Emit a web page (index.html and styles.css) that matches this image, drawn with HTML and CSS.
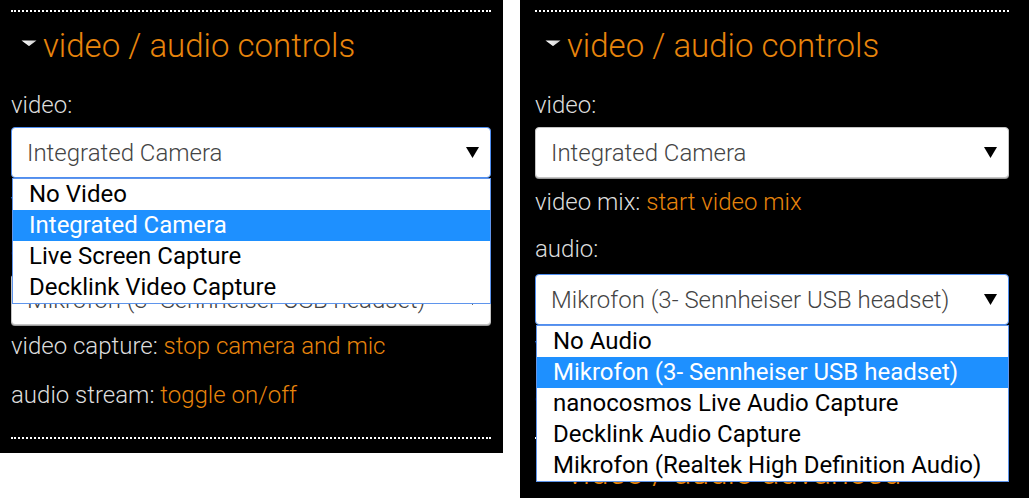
FILE: index.html
```html
<!DOCTYPE html>
<html lang="en">
<head>
<meta charset="utf-8">
<title>video / audio controls</title>
<link rel="stylesheet" href="styles.css">
</head>
<body>
<div class="page">
  <section class="panel panel-left">
    <div class="rule"></div>
    <h2 class="section-title"><svg class="caret" viewBox="0 0 16 6" width="16" height="6"><defs><linearGradient id="cg1" x1="0" x2="1" y1="0" y2="0"><stop offset="0" stop-color="#fff"/><stop offset="1" stop-color="#cfcfcf"/></linearGradient></defs><path d="M0.5,0.5 L15.5,0.5 L8.5,5.8 Q8,6.2 7.5,5.8 Z" fill="url(#cg1)"/></svg>video / audio controls</h2>
    <div class="label">video:</div>
    <div class="select-wrap">
      <div class="select is-focused"><span class="select-value">Integrated Camera</span><svg class="select-arrow" viewBox="0 0 13 11" width="13" height="11"><polygon points="0,0 13,0 6.5,11" fill="#000"/></svg></div>
      <ul class="dropdown">
        <li class="option">No Video</li>
        <li class="option is-active">Integrated Camera</li>
        <li class="option">Live Screen Capture</li>
        <li class="option">Decklink Video Capture</li>
      </ul>
    </div>
    <p class="row row-mix">video mix: <a class="link">start video mix</a></p>
    <div class="label label-audio">audio:</div>
    <div class="select-wrap select-wrap-audio">
      <div class="select"><span class="select-value">Mikrofon (3- Sennheiser USB headset)</span><svg class="select-arrow" viewBox="0 0 13 11" width="13" height="11"><polygon points="0,0 13,0 6.5,11" fill="#000"/></svg></div>
    </div>
    <p class="row row-capture">video capture: <a class="link">stop camera and mic</a></p>
    <p class="row row-stream">audio stream: <a class="link">toggle on/off</a></p>
    <div class="rule rule-bottom"></div>
  </section>

  <section class="panel panel-right">
    <div class="rule"></div>
    <h2 class="section-title"><svg class="caret" viewBox="0 0 16 6" width="16" height="6"><defs><linearGradient id="cg2" x1="0" x2="1" y1="0" y2="0"><stop offset="0" stop-color="#fff"/><stop offset="1" stop-color="#cfcfcf"/></linearGradient></defs><path d="M0.5,0.5 L15.5,0.5 L8.5,5.8 Q8,6.2 7.5,5.8 Z" fill="url(#cg2)"/></svg>video / audio controls</h2>
    <div class="label">video:</div>
    <div class="select-wrap">
      <div class="select"><span class="select-value">Integrated Camera</span><svg class="select-arrow" viewBox="0 0 13 11" width="13" height="11"><polygon points="0,0 13,0 6.5,11" fill="#000"/></svg></div>
    </div>
    <p class="row row-mix">video mix: <a class="link">start video mix</a></p>
    <div class="label label-audio">audio:</div>
    <div class="select-wrap select-wrap-audio">
      <div class="select is-focused"><span class="select-value">Mikrofon (3- Sennheiser USB headset)</span><svg class="select-arrow" viewBox="0 0 13 11" width="13" height="11"><polygon points="0,0 13,0 6.5,11" fill="#000"/></svg></div>
      <ul class="dropdown">
        <li class="option">No Audio</li>
        <li class="option is-active">Mikrofon (3- Sennheiser USB headset)</li>
        <li class="option">nanocosmos Live Audio Capture</li>
        <li class="option">Decklink Audio Capture</li>
        <li class="option">Mikrofon (Realtek High Definition Audio)</li>
      </ul>
    </div>
    <p class="row row-capture">video capture: <a class="link">stop camera and mic</a></p>
    <p class="row row-stream">audio stream: <a class="link">toggle on/off</a></p>
    <div class="rule rule-bottom"></div>
    <h2 class="section-title"><svg class="caret" viewBox="0 0 16 6" width="16" height="6"><defs><linearGradient id="cg3" x1="0" x2="1" y1="0" y2="0"><stop offset="0" stop-color="#fff"/><stop offset="1" stop-color="#cfcfcf"/></linearGradient></defs><path d="M0.5,0.5 L15.5,0.5 L8.5,5.8 Q8,6.2 7.5,5.8 Z" fill="url(#cg3)"/></svg>video / audio advanced</h2>
  </section>
</div>
</body>
</html>
```

FILE: styles.css
```css
html, body {
  margin: 0;
  padding: 0;
  background: #fff;
}

body {
  font-family: Roboto, "Liberation Sans", sans-serif;
}

.page {
  display: flex;
  align-items: flex-start;
  gap: 17px;
  height: 498px;
  overflow: hidden;
}

.panel {
  background: #000;
  box-sizing: border-box;
  flex: none;
}

.panel-left {
  width: 503px;
  height: 453px;
  padding: 10px 12px 0 11px;
}

.panel-right {
  width: 509px;
  height: 498px;
  padding: 10px 20px 0 15px;
  overflow: hidden;
}

.rule {
  border-top: 2px dotted #fff;
  height: 0;
}

.rule-bottom {
  margin-top: 28px;
}

.section-title {
  display: flex;
  align-items: flex-start;
  margin: 14px 0 0;
  font-size: 33px;
  line-height: 40px;
  font-weight: 300;
  color: #e8850c;
  white-space: nowrap;
}

.caret {
  flex: none;
  margin: 14px 6px 0 10px;
}

.label,
.row {
  margin: 0;
  font-size: 24px;
  line-height: 28px;
  font-weight: 300;
  color: #ddd;
  white-space: nowrap;
}

.label {
  margin-top: 25px;
}

.label-audio {
  margin-top: 19px;
}

.row-mix {
  margin-top: 10px;
}

.row-capture {
  margin-top: 7px;
}

.row-stream {
  margin-top: 21px;
}

.link {
  color: #e8850c;
}

.select-wrap {
  position: relative;
  margin-top: 8px;
}

.select-wrap-audio {
  margin-top: 11px;
}

.select {
  box-sizing: border-box;
  height: 51px;
  display: flex;
  align-items: center;
  justify-content: space-between;
  padding: 0 11px 0 15px;
  background: #fff;
  border: 1px solid #c4c4c4;
  border-radius: 4px;
  box-shadow: 0 1px 0 #9a9a9a;
  font-size: 24px;
  font-weight: 300;
  color: #444;
  white-space: nowrap;
}

.select.is-focused {
  border-color: #4f8ef0;
  box-shadow: none;
}

.select-arrow {
  flex: none;
}

.dropdown {
  position: absolute;
  top: 100%;
  left: 1px;
  right: 0;
  z-index: 2;
  margin: 0;
  padding: 0;
  list-style: none;
  background: #fff;
  border: 1px solid #5f95ec;
}

.option {
  height: 31px;
  line-height: 31px;
  padding-left: 16px;
  font-size: 24px;
  font-weight: 400;
  color: #000;
  white-space: nowrap;
}

.option.is-active {
  background: #1e90ff;
  color: #fff;
}
```
